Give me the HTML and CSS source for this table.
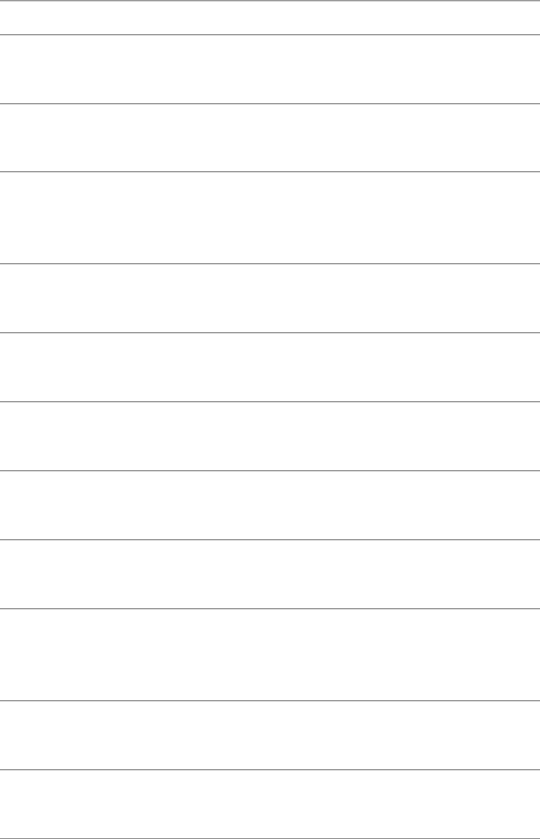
FILE: index.html
```html
<!DOCTYPE html>
<html lang="en">
<head>
<meta charset="utf-8">
<title>List</title>
<link rel="stylesheet" href="styles.css">
</head>
<body>
<div class="list">
  <div class="row row-head"></div>
  <div class="row"></div>
  <div class="row row-short"></div>
  <div class="row row-tall"></div>
  <div class="row"></div>
  <div class="row"></div>
  <div class="row"></div>
  <div class="row"></div>
  <div class="row"></div>
  <div class="row row-tall"></div>
  <div class="row"></div>
  <div class="row"></div>
</div>
</body>
</html>
```
FILE: styles.css
```css
html, body {
  margin: 0;
  padding: 0;
  background: #ffffff;
  font-family: "Liberation Sans", Arial, sans-serif;
}
.list {
  display: flex;
  flex-direction: column;
  border-top: 1px solid #999999;
  box-shadow: inset 0 1px 0 #dcdcdc;
}
.row {
  height: 68px;
  border-bottom: 1px solid #999999;
  box-shadow: 0 1px 0 #dcdcdc;
}
.row-head {
  height: 33px;
}
.row-short {
  height: 67px;
}
.row-tall {
  height: 91px;
}
```
